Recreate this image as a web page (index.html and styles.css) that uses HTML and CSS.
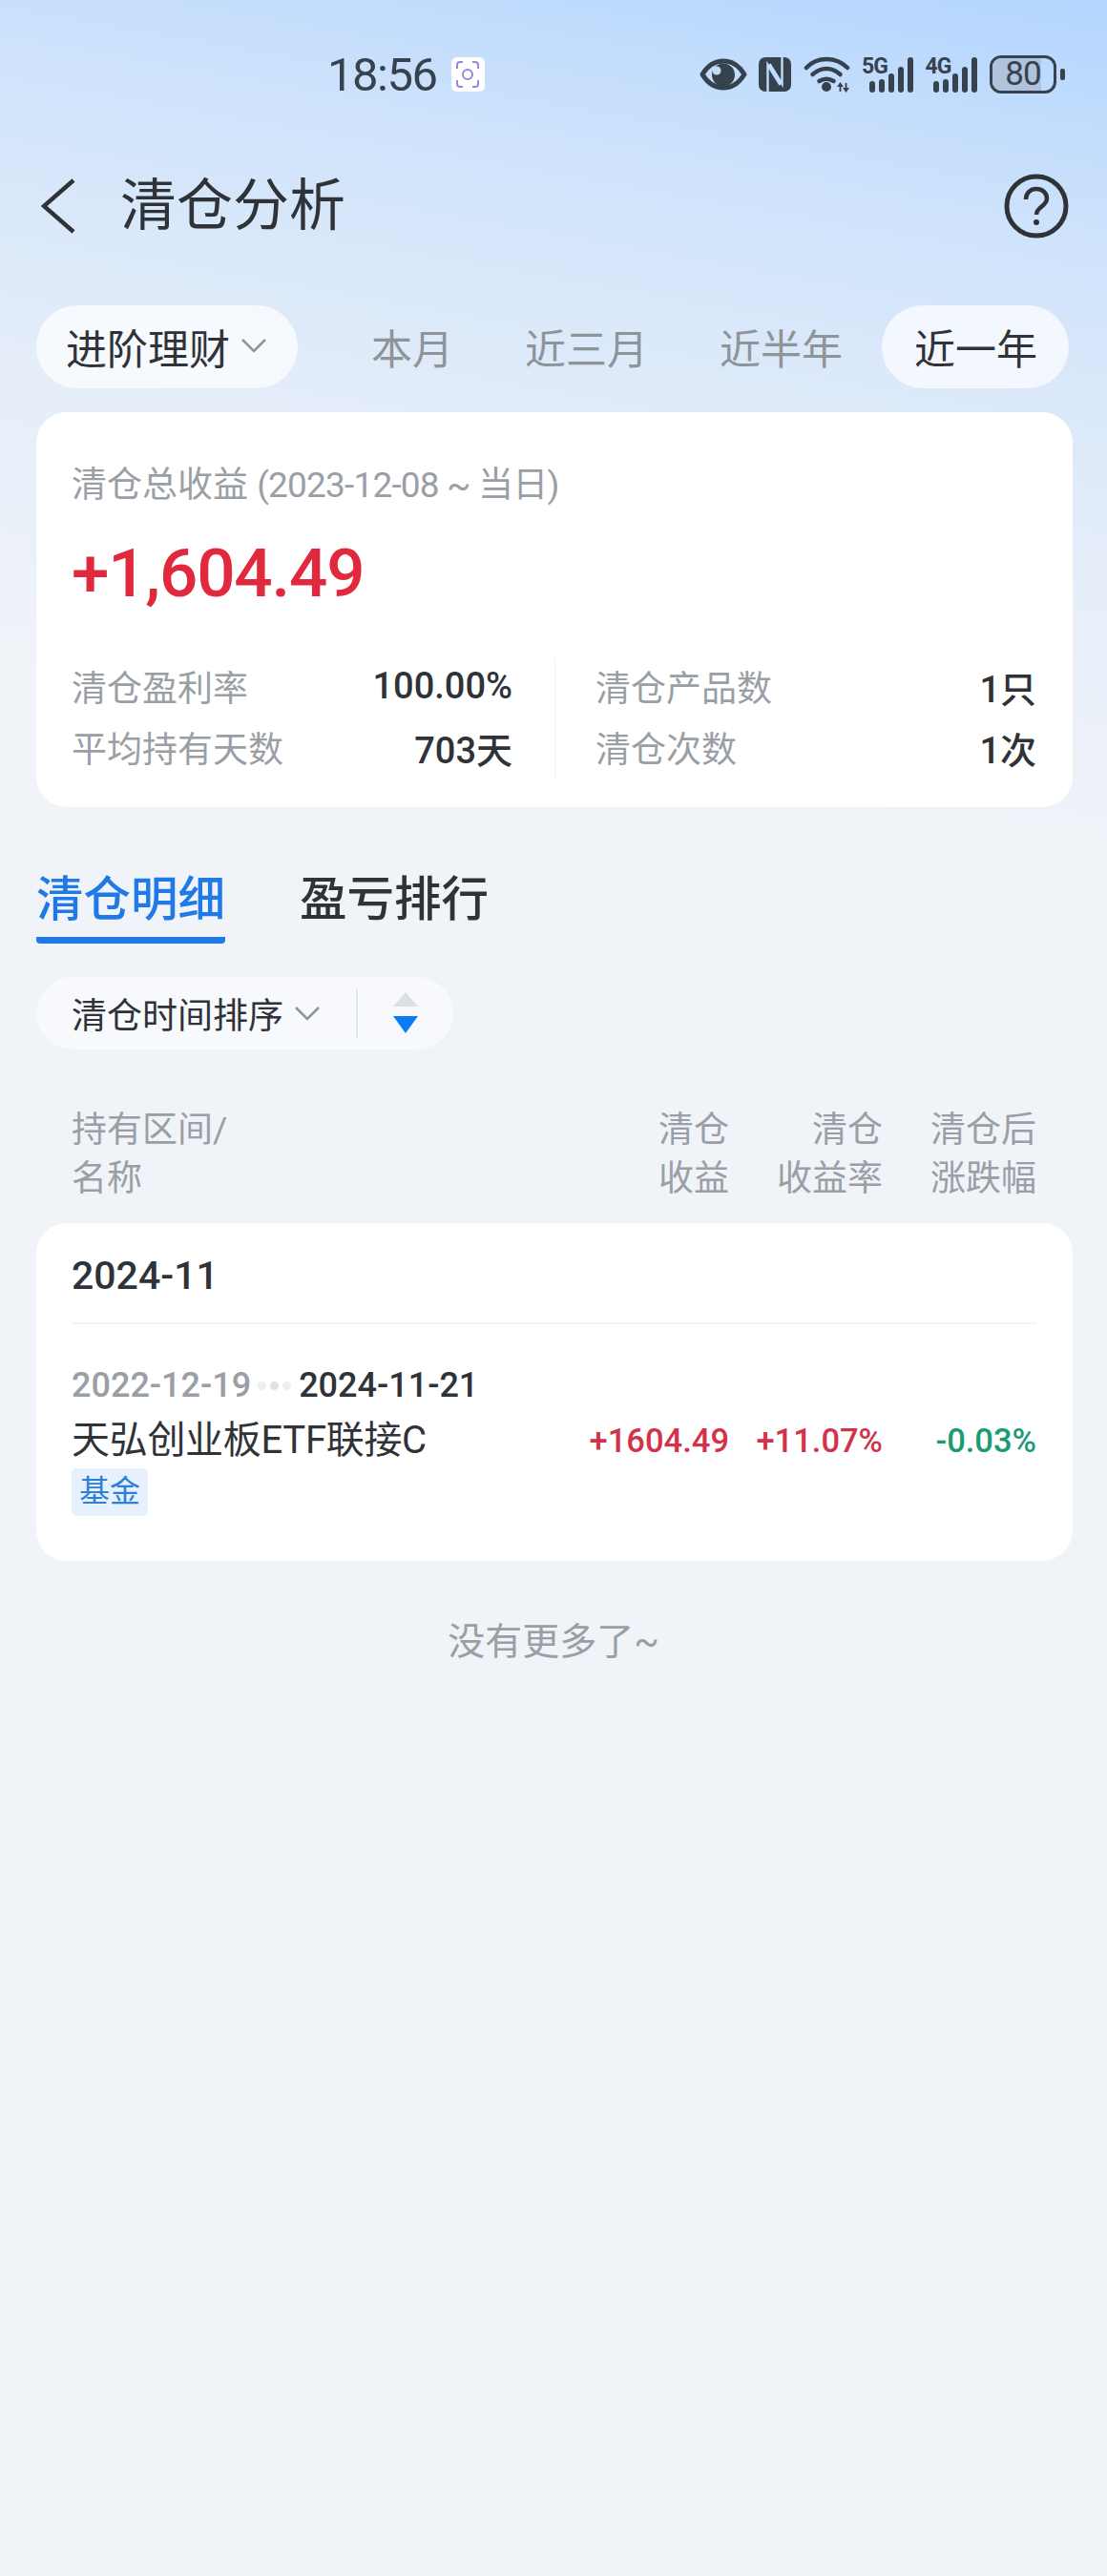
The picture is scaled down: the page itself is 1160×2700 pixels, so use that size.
FILE: index.html
```html
<!DOCTYPE html>
<html lang="zh-CN">
<head>
	<meta charset="UTF-8">
	<meta name="viewport" content="width=device-width, initial-scale=1.0">
	<title>清仓分析</title>
	<link rel="stylesheet" href="styles.css">
</head>
<body>
	<div class="page">
		<div class="status-bar">
			<span class="status-time">18:56</span>
			<span class="status-app">
				<svg width="24" height="28" viewBox="0 0 24 28" fill="none" stroke="#9a86d8" stroke-width="2">
					<path d="M1 8V4q0-3 3-3h3M17 1h3q3 0 3 3v4M23 20v4q0 3-3 3h-3M7 27H4q-3 0-3-3v-4" />
					<circle cx="12" cy="14" r="5" />
				</svg>
			</span>
			<div class="status-icons">
				<svg width="50" height="34" viewBox="0 0 50 34">
					<path d="M3 17C9 7 16 3 25 3s16 4 22 14c-6 10-13 14-22 14S9 27 3 17z" fill="none" stroke="#37424f" stroke-width="5" stroke-linejoin="round" />
					<circle cx="25" cy="17.500" r="12" fill="#37424f" />
					<circle cx="18" cy="13" r="4.500" fill="#c2dcfb" />
				</svg>
				<svg width="34" height="36" viewBox="0 0 34 36">
					<rect x="0" y="0" width="34" height="36" rx="7" fill="#37424f" />
					<path d="M9.500 36V8l13 21M24.500 0v28L11.500 7" fill="none" stroke="#c2dcfb" stroke-width="2.400" />
				</svg>
				<svg width="49" height="38" viewBox="0 0 49 38" fill="none" stroke="#37424f" stroke-width="4.500" stroke-linecap="round">
					<path d="M3 12C14 0 34 0 46 12" />
					<path d="M9.500 19c9-8 20-8 29 0" />
					<path d="M16.500 26c5-3 10-3 15 0" />
					<circle cx="24" cy="32" r="5" fill="#37424f" stroke="none" />
					<path d="M38.500 37v-6M44.500 28v6" stroke-width="1.800" stroke-linecap="butt" />
					<path d="M35 32l3.500-5 3.500 5zM41 33l3.500 5 3.500-5z" fill="#37424f" stroke="none" />
				</svg>
				<span class="signal">
					<span class="signal-label">5G</span>
					<span class="signal-bars"><i class="bar-1"></i><i class="bar-2"></i><i class="bar-3"></i><i class="bar-4"></i><i class="bar-5"></i></span>
				</span>
				<span class="signal">
					<span class="signal-label">4G</span>
					<span class="signal-bars"><i class="bar-1"></i><i class="bar-2"></i><i class="bar-3"></i><i class="bar-4"></i><i class="bar-5"></i></span>
				</span>
				<span class="battery">
					<span class="battery-body"><span class="battery-level"></span><span class="battery-text">80</span></span>
					<span class="battery-nub"></span>
				</span>
			</div>
		</div>

		<div class="nav-bar">
			<svg class="nav-back" width="36" height="58" viewBox="0 0 36 58" fill="none" stroke="#2f3338" stroke-width="4.500">
				<path d="M34 2L3 29l31 27" />
			</svg>
			<h1 class="nav-title">清仓分析</h1>
			<svg class="nav-help" width="68" height="68" viewBox="0 0 68 68" fill="none" stroke="#2f3338" stroke-width="5">
				<circle cx="34" cy="34" r="31" />
				<path d="M23 27c0-7 5-11 11-11s11 4 11 10c0 8-11 9-11 17" stroke-width="4.500" />
				<circle cx="34" cy="51" r="3" fill="#2f3338" stroke="none" />
			</svg>
		</div>

		<div class="filter-row">
			<div class="filter-select">进阶理财
				<svg width="26" height="15" viewBox="0 0 26 15" fill="none" stroke="#8f9499" stroke-width="2.500"><path d="M1 1l12 12L25 1" /></svg>
			</div>
			<div class="filter-tabs">
				<span class="filter-tab">本月</span>
				<span class="filter-tab">近三月</span>
				<span class="filter-tab">近半年</span>
				<span class="filter-tab active">近一年</span>
			</div>
		</div>

		<section class="card summary">
			<div class="summary-label">清仓总收益 <span class="summary-range">(2023-12-08 ~ 当日)</span></div>
			<div class="summary-value">+1,604.49</div>
			<div class="stats">
				<div class="stats-col">
					<div class="stat"><span class="stat-label">清仓盈利率</span><span class="stat-value">100.00%</span></div>
					<div class="stat"><span class="stat-label">平均持有天数</span><span class="stat-value">703天</span></div>
				</div>
				<div class="stats-col">
					<div class="stat"><span class="stat-label">清仓产品数</span><span class="stat-value">1只</span></div>
					<div class="stat"><span class="stat-label">清仓次数</span><span class="stat-value">1次</span></div>
				</div>
			</div>
		</section>

		<div class="tabs">
			<span class="tab active">清仓明细</span>
			<span class="tab">盈亏排行</span>
		</div>

		<div class="sort-pill">
			<span class="sort-text">清仓时间排序</span>
			<svg width="26" height="15" viewBox="0 0 26 15" fill="none" stroke="#8f9499" stroke-width="2.500"><path d="M1 1l12 12L25 1" /></svg>
			<span class="sort-divider"></span>
			<svg width="26" height="44" viewBox="0 0 26 44">
				<path d="M13 0l13 15H0z" fill="#dcdfe3" />
				<path d="M0 25h26L13 43z" fill="#0a7df5" />
			</svg>
		</div>

		<div class="list-head">
			<div>持有区间/<br>名称</div>
			<div class="num">清仓<br>收益</div>
			<div class="num">清仓<br>收益率</div>
			<div class="num">清仓后<br>涨跌幅</div>
		</div>

		<section class="card list">
			<div class="list-month">2024-11</div>
			<div class="item">
				<div class="item-dates">
					<span class="date-start">2022-12-19</span>
					<span class="date-dots"><i></i><i></i><i></i></span>
					<span class="date-end">2024-11-21</span>
				</div>
				<div class="item-row">
					<div>
						<div class="item-name">天弘创业板ETF联接C</div>
						<span class="item-tag">基金</span>
					</div>
					<div class="num rise">+1604.49</div>
					<div class="num rise">+11.07%</div>
					<div class="num fall">-0.03%</div>
				</div>
			</div>
		</section>

		<div class="list-end">没有更多了~</div>
	</div>
</body>
</html>
```

FILE: styles.css
```css
* { box-sizing: border-box; }
body {
	margin: 0;
	font-family: Roboto, "Noto Sans CJK SC", sans-serif;
	color: #2f3338;
	background-color: #f0f3f8;
}
.page {
	height: 2700px;
	overflow: hidden;
	background: linear-gradient(190deg, #b3d5fe 0, #cfe3fb 260px, #e4edf9 560px, #f0f3f8 880px, #f0f3f8 100%);
}
.num { text-align: right; }

/* status bar */
.status-bar {
	height: 161px;
	padding: 58px 44px 0 343px;
	display: flex;
	align-items: flex-start;
	color: #37424f;
}
.status-time {
	font-size: 49px;
	line-height: 42px;
	letter-spacing: -1.5px;
	margin-right: 15px;
}
.status-app {
	width: 35px;
	height: 36px;
	margin-top: 2px;
	background: #fff;
	border-radius: 6px;
	display: flex;
	align-items: center;
	justify-content: center;
}
.status-icons {
	margin-left: auto;
	display: flex;
	align-items: center;
	gap: 12.5px;
}
.signal {
	position: relative;
	width: 54px;
	height: 37px;
}
.signal-label {
	position: absolute;
	left: 0;
	top: 0;
	font-size: 23px;
	line-height: 20px;
	font-weight: 700;
	letter-spacing: -1px;
}
.signal-bars {
	position: absolute;
	left: 0;
	right: 0;
	bottom: 0;
	display: flex;
	align-items: flex-end;
	justify-content: flex-end;
	gap: 4px;
}
.signal-bars i {
	width: 6px;
	background: #37424f;
	border-radius: 3px;
}
.bar-1 { height: 12px; }
.bar-2 { height: 14px; }
.bar-3 { height: 20px; }
.bar-4 { height: 27px; }
.bar-5 { height: 37px; }
.battery {
	display: flex;
	align-items: center;
	gap: 4px;
	margin-left: 1px;
}
.battery-body {
	position: relative;
	width: 70px;
	height: 40px;
	border: 3px solid #37424f;
	border-radius: 12px;
	overflow: hidden;
}
.battery-level {
	position: absolute;
	left: 0;
	top: 0;
	bottom: 0;
	width: 80%;
	background: #afc3dc;
}
.battery-text {
	position: relative;
	display: block;
	text-align: center;
	font-size: 35px;
	line-height: 34px;
	letter-spacing: -1px;
}
.battery-nub {
	width: 5px;
	height: 12px;
	background: #37424f;
	border-radius: 2px;
}

/* nav */
.nav-bar {
	height: 110px;
	padding: 0 40px 0 43px;
	display: flex;
	align-items: center;
}
.nav-title {
	margin: 0 0 0 47px;
	font-size: 59px;
	line-height: 70px;
	font-weight: 400;
}
.nav-help { margin-left: auto; }

/* filters */
.filter-row {
	margin-top: 49px;
	padding: 0 40px 0 38px;
	display: flex;
	align-items: center;
}
.filter-select, .filter-tab {
	height: 87px;
	padding-bottom: 2px;
	font-size: 43px;
	display: flex;
	align-items: center;
	border-radius: 44px;
}
.filter-select {
	width: 274px;
	padding-left: 31px;
	gap: 12px;
	background: rgba(255, 255, 255, 0.7);
}
.filter-tabs {
	margin-left: auto;
	display: flex;
	gap: 8px;
}
.filter-tab {
	padding-left: 34px;
	padding-right: 33px;
	color: #8f9499;
}
.filter-tab.active {
	color: #2f3338;
	background: rgba(255, 255, 255, 0.7);
}

/* cards */
.card {
	margin: 0 36px 0 38px;
	background: #fff;
	border-radius: 32px;
}
.summary {
	margin-top: 25px;
	padding: 52px 38px 28px 37px;
}
.summary-label {
	font-size: 37px;
	line-height: 50px;
	color: #9a9fa5;
}
.summary-range {
	letter-spacing: -0.8px;
}
.summary-value {
	margin-top: 22px;
	font-size: 71px;
	line-height: 90px;
	font-weight: 500;
	letter-spacing: -1.2px;
	color: #e1293e;
}
.stats {
	margin-top: 44px;
	display: flex;
}
.stats-col {
	flex: 1;
	padding-right: 44px;
}
.stats-col + .stats-col {
	padding: 0 0 0 42px;
	border-left: 1px solid #eef0f3;
}
.stat {
	height: 64px;
	padding-bottom: 6px;
	font-size: 37px;
	display: flex;
	align-items: center;
	justify-content: space-between;
}
.stat-label { color: #9a9fa5; }
.stat-value {
	font-size: 38px;
	font-weight: 500;
}

/* tabs */
.tabs {
	margin-top: 62px;
	padding-left: 38px;
	display: flex;
	gap: 78px;
}
.tab {
	height: 81px;
	font-size: 49.5px;
	line-height: 70px;
	font-weight: 500;
}
.tab.active {
	color: #1f7ae8;
	border-bottom: 7px solid #1f7ae8;
	border-radius: 0 0 4px 4px;
}

.sort-pill {
	width: 437px;
	height: 76px;
	margin: 35px 0 0 38px;
	padding-left: 37px;
	background: #f7f9fd;
	border-radius: 38px;
	display: flex;
	align-items: center;
}
.sort-text {
	font-size: 37px;
	margin-right: 12px;
}
.sort-divider {
	width: 2px;
	height: 51px;
	margin: 0 37px 0 38px;
	background: #e3e6ea;
}

/* list */
.list-head, .item-row {
	display: grid;
	grid-template-columns: 1fr 160px 161px 161px;
}
.list-head {
	margin-top: 59px;
	padding: 0 74px 0 75px;
	font-size: 37px;
	line-height: 51px;
	color: #9a9fa5;
}
.list {
	margin-top: 21px;
	padding: 0 38px 47px 37px;
}
.list-month {
	height: 106px;
	font-size: 41px;
	font-weight: 500;
	line-height: 110px;
	border-bottom: 2px solid #f3f4f6;
}
.item { padding-top: 39px; }
.item-dates {
	height: 50px;
	font-size: 36px;
	line-height: 50px;
	font-weight: 500;
	display: flex;
	align-items: center;
}
.date-start { color: #9a9fa5; }
.date-dots {
	display: flex;
	gap: 4px;
	margin: 0 8px 0 7px;
}
.date-dots i {
	width: 9px;
	height: 9px;
	border-radius: 50%;
	background: #eceef0;
}
.date-dots i:nth-child(2) { background: #dfe1e4; }
.item-row {
	margin-top: 8px;
	font-size: 34.5px;
	line-height: 50px;
	font-weight: 500;
}
.item-name {
	font-size: 40px;
	line-height: 50px;
	font-weight: 400;
	letter-spacing: -0.3px;
	white-space: nowrap;
}
.item-tag {
	display: block;
	width: 80px;
	height: 50px;
	margin-top: 4px;
	font-size: 32px;
	line-height: 48px;
	font-weight: 400;
	text-align: center;
	color: #2d7fdb;
	background: #e6f1fd;
	border-radius: 5px;
}
.rise { color: #d2334a; }
.fall { color: #1a9b73; }
.list-end {
	margin-top: 60px;
	text-align: center;
	font-size: 39px;
	line-height: 50px;
	color: #9a9fa5;
}
```
